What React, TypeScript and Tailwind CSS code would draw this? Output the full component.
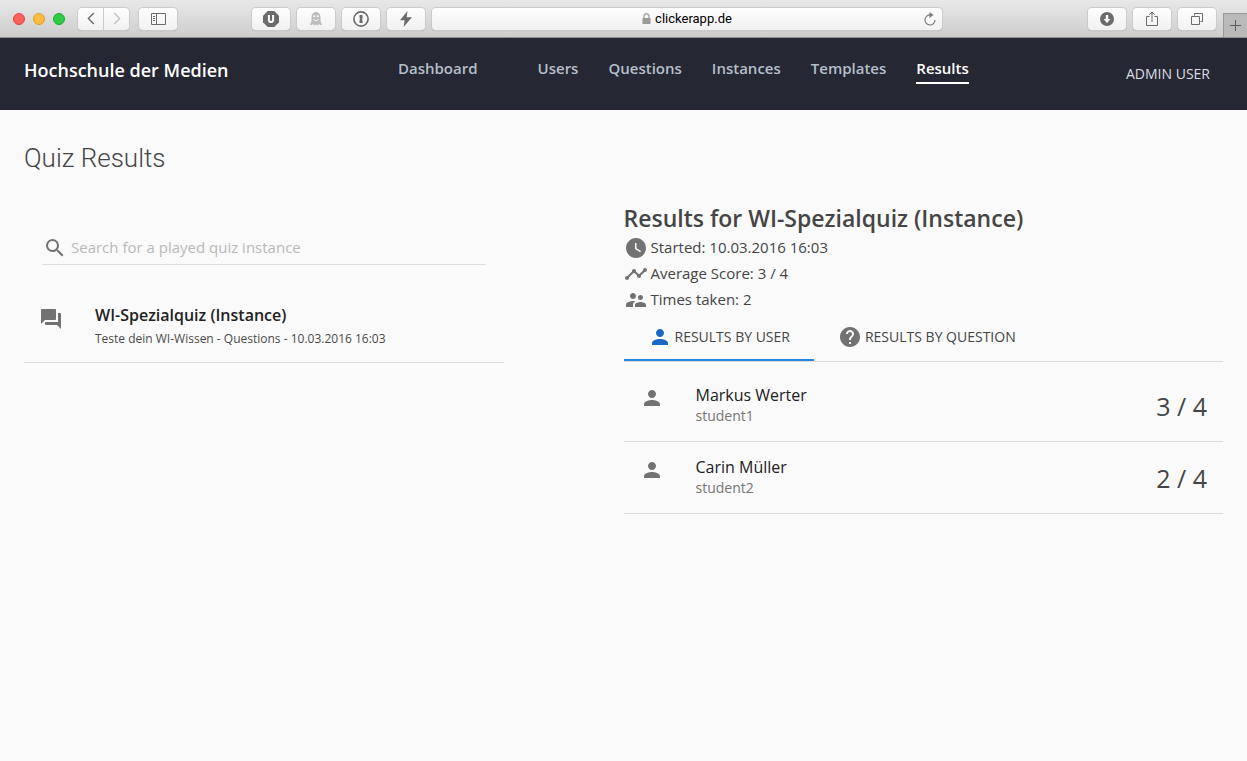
import type { ReactNode } from "react";
import {
  MdForum,
  MdHelp,
  MdPerson,
  MdSearch,
  MdSupervisorAccount,
  MdTimeline,
  MdWatchLater,
} from "react-icons/md";

const toolButton =
  "flex h-[22px] w-[38px] shrink-0 items-center justify-center rounded bg-linear-to-b from-[#fefefe] to-[#f1f1f1] text-[#6b6b6b] shadow-[0_0_0_1px_#cbcbcb,0_1px_1px_#9f9f9f]";

function ToolButton({ label, children }: { label: string; children: ReactNode }) {
  return (
    <button type="button" aria-label={label} className={toolButton}>
      {children}
    </button>
  );
}

function BrowserBar() {
  return (
    <div className="flex h-[38px] items-center border-b border-[#8d8d8d] bg-linear-to-b from-[#e8e8e8] to-[#cdcdcd] pl-[13px]">
      <div className="flex shrink-0 gap-2">
        <button type="button" aria-label="Close" className="size-3 rounded-full border border-[#e2463f] bg-[#fc615d]" />
        <button type="button" aria-label="Minimize" className="size-3 rounded-full border border-[#dfa023] bg-[#fdbc40]" />
        <button type="button" aria-label="Zoom" className="size-3 rounded-full border border-[#1dad2b] bg-[#2fca44]" />
      </div>
      <div className="ml-[13px] flex shrink-0 gap-px rounded bg-[#cbcbcb] shadow-[0_0_0_1px_#cbcbcb,0_1px_1px_#9f9f9f]">
        <button type="button" aria-label="Back" className="flex h-[22px] w-[25px] items-center justify-center rounded-l bg-linear-to-b from-[#fefefe] to-[#f1f1f1]">
          <svg viewBox="0 0 8 14" className="h-[13px] w-2" fill="none" stroke="#6b6b6b" strokeWidth="1.5">
            <path d="M7 1 1.2 7 7 13" />
          </svg>
        </button>
        <button type="button" aria-label="Forward" className="flex h-[22px] w-[25px] items-center justify-center rounded-r bg-linear-to-b from-[#fefefe] to-[#f1f1f1]">
          <svg viewBox="0 0 8 14" className="h-[13px] w-2" fill="none" stroke="#c4c4c4" strokeWidth="1.5">
            <path d="M1 1 6.8 7 1 13" />
          </svg>
        </button>
      </div>
      <div className="ml-[10px] flex shrink-0">
        <ToolButton label="Show sidebar">
          <svg viewBox="0 0 15 12" className="h-3 w-[15px]" fill="none" stroke="currentColor">
            <path d="M.5.5h14v11H.5zM5.5.5v11M2 3.5h2M2 5.5h2M2 7.5h2" />
          </svg>
        </ToolButton>
      </div>
      <div className="ml-[75px] flex shrink-0 gap-[7px]">
        <ToolButton label="Content blocker">
          <svg viewBox="0 0 16 16" className="size-4">
            <path fill="currentColor" d="M4.7 0h6.6L16 4.7v6.6L11.3 16H4.7L0 11.3V4.7z" />
            <path fill="none" stroke="#fff" strokeWidth="2" d="M5.9 4v5a2.100 2.100 0 0 0 4.200 0V4" />
          </svg>
        </ToolButton>
        <ToolButton label="Tracker blocker">
          <svg viewBox="0 0 12 14" className="h-[14px] w-3">
            <path fill="#bdbdbd" d="M1.500 5C1.500 2 3.300 0 6 0s4.500 2 4.500 5v4l1.500 4h-2l-1-1-1.500 1.500L6 12.500 4.500 13.500 3 12l-1 1H0l1.500-4z" />
            <circle cx="4.300" cy="4.300" r="1" fill="#fff" />
            <circle cx="7.700" cy="4.300" r="1" fill="#fff" />
            <path fill="none" stroke="#fff" strokeWidth=".9" d="M3.300 7c1.200 2 4.200 2 5.400 0" />
          </svg>
        </ToolButton>
        <ToolButton label="Password manager">
          <svg viewBox="0 0 16 16" className="size-4">
            <circle cx="8" cy="8" r="7.100" fill="none" stroke="currentColor" strokeWidth="1.600" />
            <path fill="currentColor" d="M6.500 4h3v3.200l-.8.8.8.8V12h-3V8.800l.8-.8-.8-.8z" />
          </svg>
        </ToolButton>
        <ToolButton label="Power saver">
          <svg viewBox="0 0 12 16" className="h-4 w-3">
            <path fill="currentColor" d="M7.500 0 0 9.200h4.600L3.600 16 12 6.300H6.700z" />
          </svg>
        </ToolButton>
      </div>
      <div className="ml-[7px] flex h-[22px] min-w-0 flex-1 items-center rounded bg-linear-to-b from-[#fefefe] to-[#f1f1f1] pr-[6px] pl-[18px] shadow-[0_0_0_1px_#cbcbcb,0_1px_1px_#9f9f9f]">
        <div className="flex flex-1 items-center justify-center gap-1">
          <svg viewBox="0 0 9 11" className="h-[11px] w-[9px]" aria-hidden="true">
            <path fill="none" stroke="#9a9a9a" strokeWidth="1.200" d="M2 5.500V3.200a2.500 2.500 0 0 1 5 0v2.300" />
            <path fill="#9a9a9a" d="M.5 5h8v6h-8z" />
          </svg>
          <input
            type="text"
            aria-label="Address"
            defaultValue="clickerapp.de"
            className="field-sizing-content bg-transparent pt-px font-[Roboto,sans-serif] text-[13px] leading-5 text-black outline-none"
          />
        </div>
        <button type="button" aria-label="Reload">
          <svg viewBox="0 0 12 14" className="h-[14px] w-3">
            <path fill="none" stroke="#7a7a7a" strokeWidth="1.200" d="M6.500 3A5 5 0 1 0 11 8" />
            <path fill="#7a7a7a" d="M5.500 0 9.500 3l-4 3z" />
          </svg>
        </button>
      </div>
      <div className="ml-[146px] flex shrink-0 gap-[7px]">
        <ToolButton label="Downloads">
          <svg viewBox="0 0 14 14" className="size-[14px]">
            <circle cx="7" cy="7" r="7" fill="currentColor" />
            <path fill="#fff" d="M5.800 3h2.400v4h2.300L7 11 3.500 7h2.300z" />
          </svg>
        </ToolButton>
        <ToolButton label="Share">
          <svg viewBox="0 0 12 16" className="h-4 w-3" fill="none" stroke="currentColor">
            <path d="M3.500 5.500h-3v9h11v-9h-3M6 11V1M3.300 3.700 6 1l2.700 2.700" />
          </svg>
        </ToolButton>
        <ToolButton label="Show tabs">
          <svg viewBox="0 0 12 12" className="size-3" fill="none" stroke="currentColor">
            <path d="M.5 3.500h8v8h-8zM3.500 2.500v-2h8v8h-2" />
          </svg>
        </ToolButton>
      </div>
      <button
        type="button"
        aria-label="New tab"
        className="ml-[7px] flex h-6 w-6 shrink-0 items-center justify-center self-end border-t border-l border-[#999] bg-[#b9b9b9]"
      >
        <svg viewBox="0 0 11 11" className="size-[11px]" stroke="#5c5c5c">
          <path d="M5.500 0v11M0 5.500h11" />
        </svg>
      </button>
    </div>
  );
}

const navLinks = ["Users", "Questions", "Instances", "Templates"];

function SiteHeader() {
  return (
    <header className="flex h-[72px] items-center bg-[#252733] pr-[37px] pl-6">
      <a href="#home" className="w-[374px] shrink-0 pb-2 text-[18px] leading-6 font-semibold text-white">
        Hochschule der Medien
      </a>
      <nav className="flex flex-1 items-center gap-[30px] pb-2 text-[15px] leading-6 font-semibold text-[#b5bfc9]">
        <a href="#dashboard" className="mr-[30px] border-b-2 border-transparent pb-[2px]">
          Dashboard
        </a>
        {navLinks.map((name) => (
          <a key={name} href={"#" + name.toLowerCase()} className="border-b-2 border-transparent pb-[2px]">
            {name}
          </a>
        ))}
        <a href="#results" aria-current="page" className="border-b-2 border-white pb-[2px] text-white">
          Results
        </a>
      </nav>
      <button type="button" className="text-[14px] leading-6 text-[#dcdde0]">
        ADMIN USER
      </button>
    </header>
  );
}

function QuizList() {
  return (
    <section className="w-2/5 pt-[30px]">
      <label className="mx-[18px] flex h-[33px] items-center gap-1 border-b border-[#dcdcdc] pl-px">
        <MdSearch className="size-6 shrink-0 text-[#727272]" />
        <input
          type="search"
          aria-label="Search for a played quiz instance"
          placeholder="Search for a played quiz instance"
          className="min-w-0 flex-1 bg-transparent pb-[2px] text-[15px] leading-6 outline-none placeholder:text-[#b9b9b9]"
        />
      </label>
      <ul className="mt-[26px]">
        <li className="border-b border-[#dcdcdc]">
          <a href="#instance" className="flex h-[71px] pt-3 pl-[15px]">
            <MdForum className="mt-1 size-6 shrink-0 text-[#727272]" />
            <span className="ml-8 flex flex-col">
              <span className="text-[16px] leading-6 font-semibold text-[#212121]">WI-Spezialquiz (Instance)</span>
              <span className="text-[12px] leading-6 text-[#4a4a4a]">
                Teste dein WI-Wissen - Questions - 10.03.2016 16:03
              </span>
            </span>
          </a>
        </li>
      </ul>
    </section>
  );
}

const facts = [
  { icon: MdWatchLater, text: "Started: 10.03.2016 16:03" },
  { icon: MdTimeline, text: "Average Score: 3 / 4" },
  { icon: MdSupervisorAccount, text: "Times taken: 2" },
];

const users = [
  { name: "Markus Werter", login: "student1", score: "3 / 4" },
  { name: "Carin Müller", login: "student2", score: "2 / 4" },
];

function QuizResults() {
  return (
    <section className="w-1/2">
      <h2 className="text-[23px] leading-8 font-semibold text-[#454545]">Results for WI-Spezialquiz (Instance)</h2>
      <ul className="pt-px">
        {facts.map(({ icon: Icon, text }) => (
          <li key={text} className="flex h-[26px] items-center gap-[3px] text-[15px] leading-6 text-[#454545]">
            <Icon className="size-6 shrink-0 text-[#727272]" />
            <span className="pb-[2px]">{text}</span>
          </li>
        ))}
      </ul>
      <div role="tablist" className="mt-px flex h-12 border-b border-[#dcdcdc] text-[14px] text-[#454545]">
        <button
          type="button"
          role="tab"
          aria-selected="true"
          className="flex items-center gap-[3px] border-b-2 border-[#2389e4] px-6"
        >
          <MdPerson className="size-6 text-[#1a67c4]" />
          RESULTS BY USER
        </button>
        <button
          type="button"
          role="tab"
          aria-selected="false"
          className="flex items-center gap-[3px] border-b-2 border-transparent px-6"
        >
          <MdHelp className="size-6 text-[#727272]" />
          RESULTS BY QUESTION
        </button>
      </div>
      <ul className="pt-2">
        {users.map((user) => (
          <li key={user.login} className="flex h-[72px] border-b border-[#dcdcdc] px-4 pt-[14px]">
            <MdPerson className="mt-[2px] size-6 shrink-0 text-[#727272]" />
            <div className="ml-8 flex-1">
              <p className="text-[16px] leading-[22px] text-[#212121]">{user.name}</p>
              <p className="text-[14px] leading-5 text-[#757575]">{user.login}</p>
            </div>
            <p className="pt-[6px] text-[25px] leading-8 text-[#454545]">{user.score}</p>
          </li>
        ))}
      </ul>
    </section>
  );
}

export default function App() {
  return (
    <div className="min-h-screen bg-[#fafafa] font-['Open_Sans',sans-serif]">
      <BrowserBar />
      <SiteHeader />
      <main className="px-6 pt-8">
        <h1 className="font-[Roboto,sans-serif] text-[26px] leading-8 font-light text-[#454545]">Quiz Results</h1>
        <div className="flex items-start justify-between pt-7">
          <QuizList />
          <QuizResults />
        </div>
      </main>
    </div>
  );
}
